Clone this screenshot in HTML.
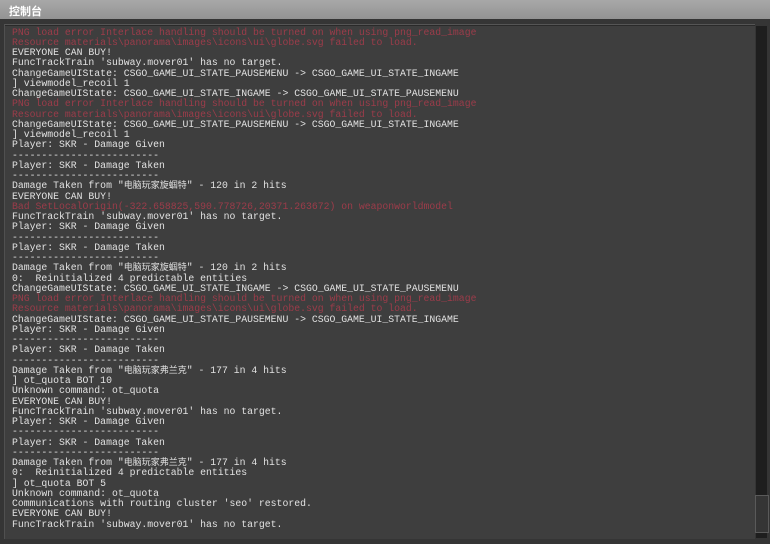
<!DOCTYPE html>
<html><head><meta charset="utf-8"><style>
html,body{margin:0;padding:0;}
body{width:770px;height:544px;overflow:hidden;background:#3a3a3a;position:relative;}
#tb{position:absolute;left:0;top:0;width:770px;height:19px;background:linear-gradient(#a8a8a8,#939393);}
#tb span{position:absolute;left:9px;top:3px;font:bold 11px "Liberation Sans","Noto Sans CJK SC",sans-serif;color:#fff;}
#frame{position:absolute;left:0;top:19px;width:770px;height:525px;background:#353535;}
#box{position:absolute;left:4px;top:24px;width:750px;height:514px;background:#3e3e3e;border-top:1px solid #555;border-left:1px solid #505050;box-shadow:inset 0 1px 0 #2a2a2a;}
#sb{position:absolute;left:756px;top:26px;width:11px;height:512px;background:#1e1e1e;}
#thumb{position:absolute;left:755px;top:495px;width:12px;height:36px;background:#353535;border:1px solid #5a5a5a;}
#txt{position:absolute;left:12px;top:27.5px;font:9.8px/10.25px "Liberation Mono","Noto Sans CJK SC",monospace;color:#e2e2e2;white-space:pre;}
.r{color:#9c3c4a;}
.c{font-size:9px;}
</style></head><body>
<div id="tb"><span>控制台</span></div>
<div id="frame"></div>
<div id="box"></div>
<div id="sb"></div><div id="thumb"></div>
<div id="txt"><span class="r">PNG load error Interlace handling should be turned on when using png_read_image</span>
<span class="r">Resource materials\panorama\images\icons\ui\globe.svg failed to load.</span>
EVERYONE CAN BUY!
FuncTrackTrain 'subway.mover01' has no target.
ChangeGameUIState: CSGO_GAME_UI_STATE_PAUSEMENU -> CSGO_GAME_UI_STATE_INGAME
] viewmodel_recoil 1
ChangeGameUIState: CSGO_GAME_UI_STATE_INGAME -> CSGO_GAME_UI_STATE_PAUSEMENU
<span class="r">PNG load error Interlace handling should be turned on when using png_read_image</span>
<span class="r">Resource materials\panorama\images\icons\ui\globe.svg failed to load.</span>
ChangeGameUIState: CSGO_GAME_UI_STATE_PAUSEMENU -> CSGO_GAME_UI_STATE_INGAME
] viewmodel_recoil 1
Player: SKR - Damage Given
-------------------------
Player: SKR - Damage Taken
-------------------------
Damage Taken from "<span class="c">电脑玩家旋蝈特</span>" - 120 in 2 hits
EVERYONE CAN BUY!
<span class="r">Bad SetLocalOrigin(-322.658825,590.778726,20371.263672) on weaponworldmodel</span>
FuncTrackTrain 'subway.mover01' has no target.
Player: SKR - Damage Given
-------------------------
Player: SKR - Damage Taken
-------------------------
Damage Taken from "<span class="c">电脑玩家旋蝈特</span>" - 120 in 2 hits
0:  Reinitialized 4 predictable entities
ChangeGameUIState: CSGO_GAME_UI_STATE_INGAME -> CSGO_GAME_UI_STATE_PAUSEMENU
<span class="r">PNG load error Interlace handling should be turned on when using png_read_image</span>
<span class="r">Resource materials\panorama\images\icons\ui\globe.svg failed to load.</span>
ChangeGameUIState: CSGO_GAME_UI_STATE_PAUSEMENU -> CSGO_GAME_UI_STATE_INGAME
Player: SKR - Damage Given
-------------------------
Player: SKR - Damage Taken
-------------------------
Damage Taken from "<span class="c">电脑玩家弗兰克</span>" - 177 in 4 hits
] ot_quota BOT 10
Unknown command: ot_quota
EVERYONE CAN BUY!
FuncTrackTrain 'subway.mover01' has no target.
Player: SKR - Damage Given
-------------------------
Player: SKR - Damage Taken
-------------------------
Damage Taken from "<span class="c">电脑玩家弗兰克</span>" - 177 in 4 hits
0:  Reinitialized 4 predictable entities
] ot_quota BOT 5
Unknown command: ot_quota
Communications with routing cluster 'seo' restored.
EVERYONE CAN BUY!
FuncTrackTrain 'subway.mover01' has no target.</div>
</body></html>
